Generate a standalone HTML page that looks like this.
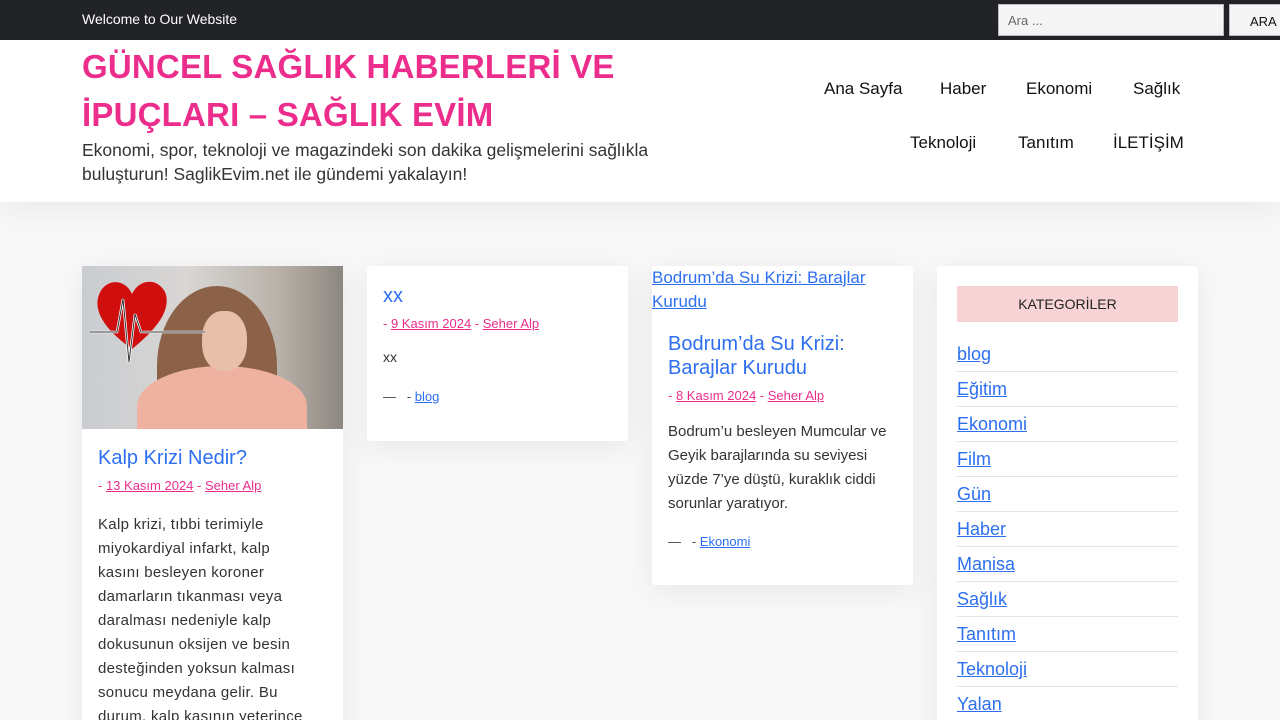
<!DOCTYPE html>
<html><head><meta charset="utf-8"><style>
*{box-sizing:border-box;margin:0;padding:0}
html,body{width:1280px;height:720px;overflow:hidden}
body{background:#f8f8f8;font-family:"Liberation Sans",sans-serif;position:relative}
.top{position:absolute;left:0;top:0;width:1280px;height:40px;background:#212327}
.top .w{position:absolute;left:82px;top:11px;color:#fff;font-size:14px}
.top input{position:absolute;left:998px;top:4px;width:226px;height:32px;border:1px solid #bbb;background:#f5f5f5;padding-left:9px;font-size:13px;color:#666;font-family:"Liberation Sans",sans-serif}
.top .b{position:absolute;left:1229px;top:4px;width:60px;height:32px;border:1px solid #bbb;background:#f5f5f5;padding:9px 0 0 20px;font-size:13px;color:#111}
.hd{position:absolute;left:0;top:40px;width:1280px;height:162px;background:#fff;box-shadow:0 8px 30px rgba(0,0,0,.06)}
.title{position:absolute;left:82px;top:43px;width:600px;color:#ec2d8c;font-size:33px;line-height:48px;font-weight:bold;letter-spacing:.2px}
.tag{position:absolute;left:82px;top:138px;width:600px;color:#333;font-size:17.5px;line-height:24px}
.nav{position:absolute;color:#111;font-size:17px}
.card{position:absolute;background:#fff;box-shadow:0 6px 30px rgba(0,0,0,.07);border-radius:3px}
.h{color:#2d6ff0;font-size:20px;line-height:24px}
.meta{font-size:13px;color:#ec2d8c}
.meta u{color:#ec2d8c}
.p{font-size:15px;line-height:24px;color:#333}
.cat{font-size:13px;color:#444}
.cat u{color:#2d6ff0}
.side a{display:block;color:#2d6ff0;font-size:18px;text-decoration:underline;height:35px;line-height:35px;border-bottom:1px solid #e5e5e5}
</style></head><body>
<div class="top"><div class="w">Welcome to Our Website</div><input value="Ara ..."><div class="b">ARA</div></div>
<div class="hd"></div>
<div class="title">GÜNCEL SAĞLIK HABERLERİ VE İPUÇLARI – SAĞLIK EVİM</div>
<div class="tag">Ekonomi, spor, teknoloji ve magazindeki son dakika gelişmelerini sağlıkla buluşturun! SaglikEvim.net ile gündemi yakalayın!</div>
<div class="nav" style="left:824px;top:79px">Ana Sayfa</div>
<div class="nav" style="left:940px;top:79px">Haber</div>
<div class="nav" style="left:1026px;top:79px">Ekonomi</div>
<div class="nav" style="left:1133px;top:79px">Sağlık</div>
<div class="nav" style="left:910px;top:133px">Teknoloji</div>
<div class="nav" style="left:1018px;top:133px">Tanıtım</div>
<div class="nav" style="left:1113px;top:133px">İLETİŞİM</div>

<div class="card" style="left:82px;top:266px;width:261px;height:470px">
<div style="height:163px;background:linear-gradient(90deg,#c9ccd0,#d9d6d4 40%,#b9b2aa 75%,#8c8780);position:relative;overflow:hidden">
<div style="position:absolute;left:75px;top:20px;width:120px;height:160px;background:#8b6248;border-radius:50% 50% 0 0"></div>
<div style="position:absolute;left:55px;top:100px;width:170px;height:80px;background:#f0b2a0;border-radius:50% 50% 0 0"></div>
<div style="position:absolute;left:120px;top:45px;width:45px;height:60px;background:#e8c0aa;border-radius:45%"></div>
<svg style="position:absolute;left:5px;top:8px" width="120" height="90"><path d="M45 75 C10 50 5 30 15 15 C25 3 40 8 45 20 C52 5 70 3 78 18 C85 35 70 55 45 75Z" fill="#d10e0e"/><path d="M3 58 H30 L36 25 L42 88 L48 40 L54 58 H118" stroke="#fff" stroke-width="2.5" fill="none"/><path d="M3 58 H30 L36 25 L42 88 L48 40 L54 58 H118" stroke="#333" stroke-width="1" fill="none"/></svg>
</div>
<div style="padding:0 16px">
<div class="h" style="margin-top:17px">Kalp Krizi Nedir?</div>
<div class="meta" style="margin-top:8px">- <u>13 Kasım 2024</u> - <u>Seher Alp</u></div>
<div class="p" style="margin-top:20px;width:212px;letter-spacing:.3px">Kalp krizi, tıbbi terimiyle miyokardiyal infarkt, kalp kasını besleyen koroner damarların tıkanması veya daralması nedeniyle kalp dokusunun oksijen ve besin desteğinden yoksun kalması sonucu meydana gelir. Bu durum, kalp kasının yeterince</div>
</div></div>

<div class="card" style="left:367px;top:266px;width:261px;height:175px;padding:0 16px">
<div class="h" style="margin-top:18px">xx</div>
<div class="meta" style="margin-top:8px">- <u>9 Kasım 2024</u> - <u>Seher Alp</u></div>
<div class="p" style="margin-top:14px;font-size:14px">xx</div>
<div class="cat" style="margin-top:20px">—&nbsp;&nbsp; - <u>blog</u></div>
</div>

<div class="card" style="left:652px;top:266px;width:261px;height:319px">
<div style="color:#2d6ff0;font-size:17px;line-height:24px;text-decoration:underline">Bodrum’da Su Krizi: Barajlar Kurudu</div>
<div style="padding:0 16px">
<div class="h" style="margin-top:18px">Bodrum’da Su Krizi: Barajlar Kurudu</div>
<div class="meta" style="margin-top:8px">- <u>8 Kasım 2024</u> - <u>Seher Alp</u></div>
<div class="p" style="margin-top:17px">Bodrum’u besleyen Mumcular ve Geyik barajlarında su seviyesi yüzde 7’ye düştü, kuraklık ciddi sorunlar yaratıyor.</div>
<div class="cat" style="margin-top:18px">—&nbsp;&nbsp; - <u>Ekonomi</u></div>
</div></div>

<div class="card side" style="left:937px;top:266px;width:261px;height:470px;padding:20px 20px">
<div style="background:#f8d3d6;height:36px;text-align:center;line-height:36px;font-size:14px;color:#222">KATEGORİLER</div>
<div style="margin-top:15px">
<a>blog</a><a>Eğitim</a><a>Ekonomi</a><a>Film</a><a>Gün</a><a>Haber</a><a>Manisa</a><a>Sağlık</a><a>Tanıtım</a><a>Teknoloji</a><a>Yalan</a>
</div></div>
</body></html>
